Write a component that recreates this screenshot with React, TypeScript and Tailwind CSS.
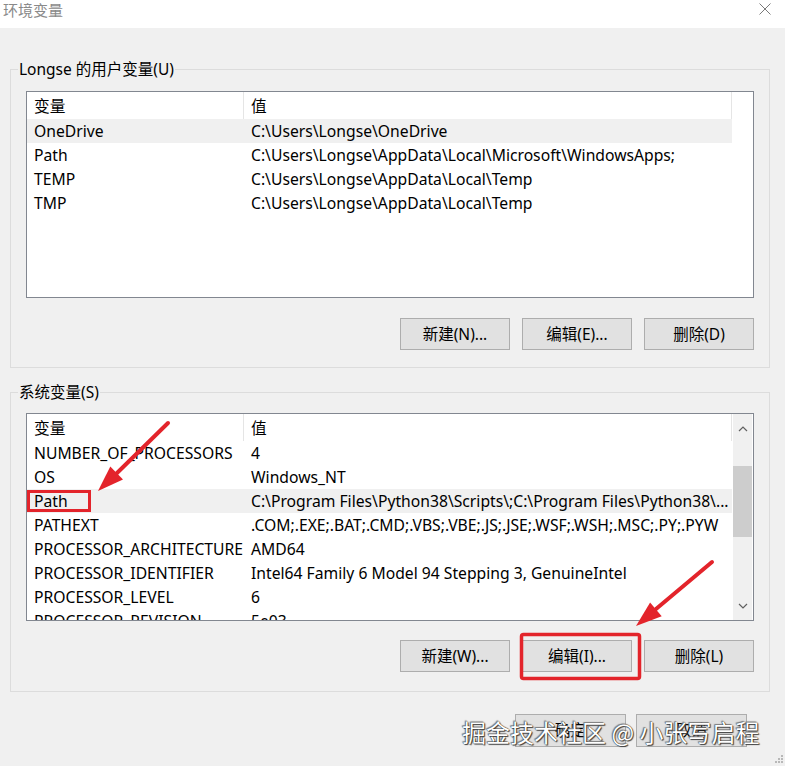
const userVars = [
  ["OneDrive", "C:\\Users\\Longse\\OneDrive"],
  ["Path", "C:\\Users\\Longse\\AppData\\Local\\Microsoft\\WindowsApps;"],
  ["TEMP", "C:\\Users\\Longse\\AppData\\Local\\Temp"],
  ["TMP", "C:\\Users\\Longse\\AppData\\Local\\Temp"],
];

const sysVars = [
  ["NUMBER_OF_PROCESSORS", "4"],
  ["OS", "Windows_NT"],
  ["Path", "C:\\Program Files\\Python38\\Scripts\\;C:\\Program Files\\Python38\\..."],
  ["PATHEXT", ".COM;.EXE;.BAT;.CMD;.VBS;.VBE;.JS;.JSE;.WSF;.WSH;.MSC;.PY;.PYW"],
  ["PROCESSOR_ARCHITECTURE", "AMD64"],
  ["PROCESSOR_IDENTIFIER", "Intel64 Family 6 Model 94 Stepping 3, GenuineIntel"],
  ["PROCESSOR_LEVEL", "6"],
  ["PROCESSOR_REVISION", "5e03"],
];

const WinButton = ({ label }: { label: string }) => (
  <button className="h-[32px] w-[110px] border border-[#adadad] bg-[#e1e1e1] pt-[1px] text-[15.5px] text-black">
    {label}
  </button>
);

const Scrollbar = () => (
  <div className="flex w-[19px] flex-col bg-[#f0f0f0]">
    <div className="flex h-[29px] items-center justify-center">
      <svg width="10" height="6" viewBox="0 0 10 6">
        <polyline points="1,5 5,1 9,5" fill="none" stroke="#606060" strokeWidth="1.2" />
      </svg>
    </div>
    <div className="flex-1">
      <div className="mt-[23px] h-[71px] bg-[#cdcdcd]" />
    </div>
    <div className="flex h-[29px] items-center justify-center">
      <svg width="10" height="6" viewBox="0 0 10 6">
        <polyline points="1,1 5,5 9,1" fill="none" stroke="#606060" strokeWidth="1.2" />
      </svg>
    </div>
  </div>
);

const VarTable = ({
  rows,
  selected,
  scroll,
  tall,
}: {
  rows: string[][];
  selected: number;
  scroll?: boolean;
  tall?: boolean;
}) => (
  <div
    className={`flex border border-[#828790] bg-white ${tall ? "h-[208px]" : "h-[207px]"}`}
  >
    <div className="w-[705px] overflow-hidden">
      <div className="flex h-[27px]">
        <div className="flex h-full w-[217px] items-center border-r border-[#e5e5e5] pl-[7px] pt-[3px]">变量</div>
        <div className="flex h-full flex-1 items-center border-r border-[#e5e5e5] pl-[7px] pt-[3px]">值</div>
      </div>
      {rows.map(([name, value], i) => (
        <div
          key={name}
          className={`flex h-[24px] items-center whitespace-nowrap pt-[2px] ${i === selected ? "bg-[#f0f0f0]" : ""}`}
        >
          <div className="w-[217px] overflow-hidden pl-[7px]">{name}</div>
          <div className="flex-1 overflow-hidden pl-[7px]">{value}</div>
        </div>
      ))}
    </div>
    <div className="flex flex-1 justify-center">{scroll && <Scrollbar />}</div>
  </div>
);

const App = () => {
  return (
    <div className="relative h-[766px] w-[785px] overflow-hidden bg-[#f0f0f0] font-['Noto_Sans','Noto_Sans_CJK_SC',sans-serif] text-[15.7px] text-black">
      {/* title bar */}
      <div className="flex h-[28px] items-start justify-between bg-white">
        <span className="ml-[3px] text-[15px] leading-[20px] text-[#8a8a8a]">环境变量</span>
        <svg className="mr-[14px] mt-[3px]" width="12" height="12" viewBox="0 0 12 12">
          <path d="M0.5 0.5 L11.5 11.5 M11.5 0.5 L0.5 11.5" stroke="#7a7a7a" strokeWidth="1" />
        </svg>
      </div>

      <div className="pl-[10px] pr-[15px]">
        <fieldset className="mt-[31px] h-[309px] border border-[#dcdcdc] px-[15px]">
          <legend className="-ml-[8px] px-[1px] text-[15.5px] leading-[20px]">Longse 的用户变量(U)</legend>
          <div className="mt-[12px]">
            <VarTable rows={userVars} selected={0} />
          </div>
          <div className="mt-[20px] flex justify-end gap-[12px]">
            <WinButton label="新建(N)..." />
            <WinButton label="编辑(E)..." />
            <WinButton label="删除(D)" />
          </div>
        </fieldset>

        <fieldset className="mt-[14px] h-[310px] border border-[#dcdcdc] px-[15px]">
          <legend className="-ml-[8px] px-[1px] text-[15.5px] leading-[20px]">系统变量(S)</legend>
          <div className="mt-[11px]">
            <VarTable rows={sysVars} selected={2} scroll tall />
          </div>
          <div className="mt-[19px] flex justify-end gap-[12px]">
            <WinButton label="新建(W)..." />
            <WinButton label="编辑(I)..." />
            <WinButton label="删除(L)" />
          </div>
        </fieldset>

        <div className="mt-[22px] flex justify-end gap-[10px] pr-[23px]">
          <button className="h-[33px] w-[111px] border border-[#adadad] bg-[#e1e1e1]">确定</button>
          <button className="h-[33px] w-[111px] border border-[#adadad] bg-[#e1e1e1]">取消</button>
        </div>
      </div>

      {/* resize grip */}
      <svg className="absolute bottom-0 right-0" width="12" height="12" viewBox="0 0 12 12">
        <g fill="#b8b8b8">
          <rect x="8" y="1" width="2" height="2" />
          <rect x="5" y="4" width="2" height="2" />
          <rect x="8" y="4" width="2" height="2" />
          <rect x="2" y="7" width="2" height="2" />
          <rect x="5" y="7" width="2" height="2" />
          <rect x="8" y="7" width="2" height="2" />
        </g>
      </svg>

      {/* annotations */}
      <svg className="pointer-events-none absolute left-0 top-0" width="785" height="766">
        <g stroke="#e3242b" fill="none">
          <rect x="28.5" y="491.5" width="61" height="19" strokeWidth="3" />
          <rect x="521.5" y="634.5" width="118" height="44" rx="2" strokeWidth="3.5" />
          <line x1="168" y1="423" x2="117" y2="473" strokeWidth="4" strokeLinecap="round" />
          <line x1="712" y1="562" x2="656" y2="609" strokeWidth="4" strokeLinecap="round" />
        </g>
        <g fill="#e3242b">
          <polygon points="98,491 123,479.4 110.3,466.4" />
          <polygon points="636,626 661.7,616.2 650.1,602.4" />
        </g>
      </svg>

      {/* watermark */}
      <div className="pointer-events-none absolute left-[462px] top-[716px] whitespace-nowrap font-['Noto_Sans_CJK_SC',sans-serif] text-[24px] leading-[32px] text-white [text-shadow:0_0_1px_#000,1px_1px_1px_#444,-1px_-1px_1px_#888]">
        掘金技术社区 @ 小张写启程
      </div>
    </div>
  );
};

export default App;
